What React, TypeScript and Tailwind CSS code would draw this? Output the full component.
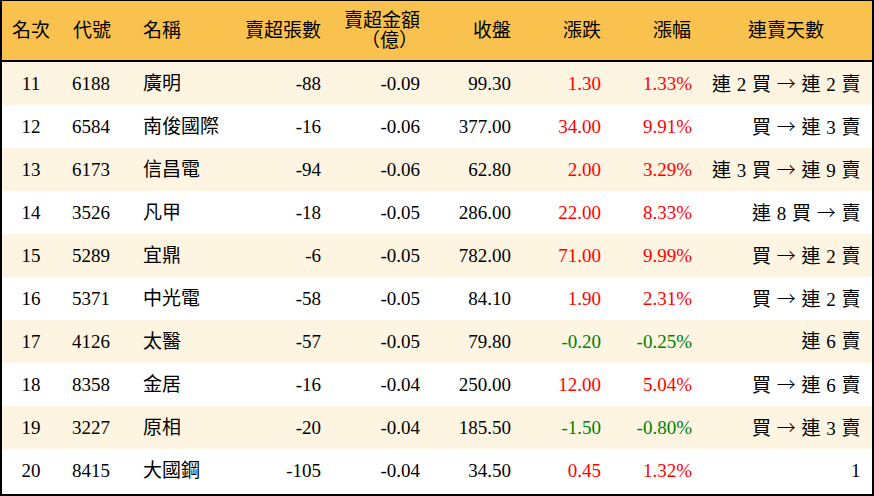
const rows = [
  { rank: 11, code: '6188', name: '廣明', lots: '-88', amt: '-0.09', close: '99.30', chg: '1.30', pct: '1.33%', streak: '連 2 買 → 連 2 賣' },
  { rank: 12, code: '6584', name: '南俊國際', lots: '-16', amt: '-0.06', close: '377.00', chg: '34.00', pct: '9.91%', streak: '買 → 連 3 賣' },
  { rank: 13, code: '6173', name: '信昌電', lots: '-94', amt: '-0.06', close: '62.80', chg: '2.00', pct: '3.29%', streak: '連 3 買 → 連 9 賣' },
  { rank: 14, code: '3526', name: '凡甲', lots: '-18', amt: '-0.05', close: '286.00', chg: '22.00', pct: '8.33%', streak: '連 8 買 → 賣' },
  { rank: 15, code: '5289', name: '宜鼎', lots: '-6', amt: '-0.05', close: '782.00', chg: '71.00', pct: '9.99%', streak: '買 → 連 2 賣' },
  { rank: 16, code: '5371', name: '中光電', lots: '-58', amt: '-0.05', close: '84.10', chg: '1.90', pct: '2.31%', streak: '買 → 連 2 賣' },
  { rank: 17, code: '4126', name: '太醫', lots: '-57', amt: '-0.05', close: '79.80', chg: '-0.20', pct: '-0.25%', streak: '連 6 賣' },
  { rank: 18, code: '8358', name: '金居', lots: '-16', amt: '-0.04', close: '250.00', chg: '12.00', pct: '5.04%', streak: '買 → 連 6 賣' },
  { rank: 19, code: '3227', name: '原相', lots: '-20', amt: '-0.04', close: '185.50', chg: '-1.50', pct: '-0.80%', streak: '買 → 連 3 賣' },
  { rank: 20, code: '8415', name: '大國鋼', lots: '-105', amt: '-0.04', close: '34.50', chg: '0.45', pct: '1.32%', streak: '1' },
];

const cols = 'grid grid-cols-[58px_70px_100px_100px_100px_90px_90px_90px_172px]';

// the arrow comes from the CJK font so it is full width, like the reference
function Streak({ text }: { text: string }) {
  const parts = text.split('→');
  if (parts.length < 2) return <>{text}</>;
  return (
    <>
      {parts[0]}
      <span style={{ fontFamily: '"Noto Sans CJK TC", sans-serif' }} className="font-light">→</span>
      {parts[1]}
    </>
  );
}

export default function App() {
  return (
    <div
      className="w-[874px] h-[496px] bg-white text-black border-t border-l-2 border-r-2 border-b-2 border-black overflow-hidden text-[19px] leading-none"
      style={{ fontFamily: '"Liberation Serif", "Noto Sans CJK TC", serif' }}
    >
      {/* header */}
      <div className={`${cols} h-[61px] items-center bg-[#f9c24f] border-b-2 border-black`}>
        <div className="text-center">名次</div>
        <div className="pl-[13px]">代號</div>
        <div className="pl-[13px]">名稱</div>
        <div className="text-right pr-[9px]">賣超張數</div>
        <div className="text-right pr-[10px] leading-[20px]">
          <div>賣超金額</div>
          <div className="pr-[2px]">（億）</div>
        </div>
        <div className="text-right pr-[9px]">收盤</div>
        <div className="text-right pr-[9px]">漲跌</div>
        <div className="text-right pr-[9px]">漲幅</div>
        <div className="text-center">連賣天數</div>
      </div>

      {rows.map((r, i) => {
        const color = r.chg.startsWith('-') ? 'text-[#008000]' : 'text-[#ff0000]';
        return (
          <div
            key={r.rank}
            className={`${cols} h-[43px] items-center ${i % 2 === 0 ? 'bg-[#fdf5e2]' : 'bg-white'}`}
          >
            <div className="text-center">{r.rank}</div>
            <div className="pl-[12px]">{r.code}</div>
            <div className="pl-[13px]">{r.name}</div>
            <div className="text-right pr-[9px]">{r.lots}</div>
            <div className="text-right pr-[10px]">{r.amt}</div>
            <div className="text-right pr-[9px]">{r.close}</div>
            <div className={`text-right pr-[9px] ${color}`}>{r.chg}</div>
            <div className={`text-right pr-[8px] ${color}`}>{r.pct}</div>
            <div className="text-right pr-[11px] whitespace-nowrap tracking-[0.5px]">
              <Streak text={r.streak} />
            </div>
          </div>
        );
      })}
    </div>
  );
}
